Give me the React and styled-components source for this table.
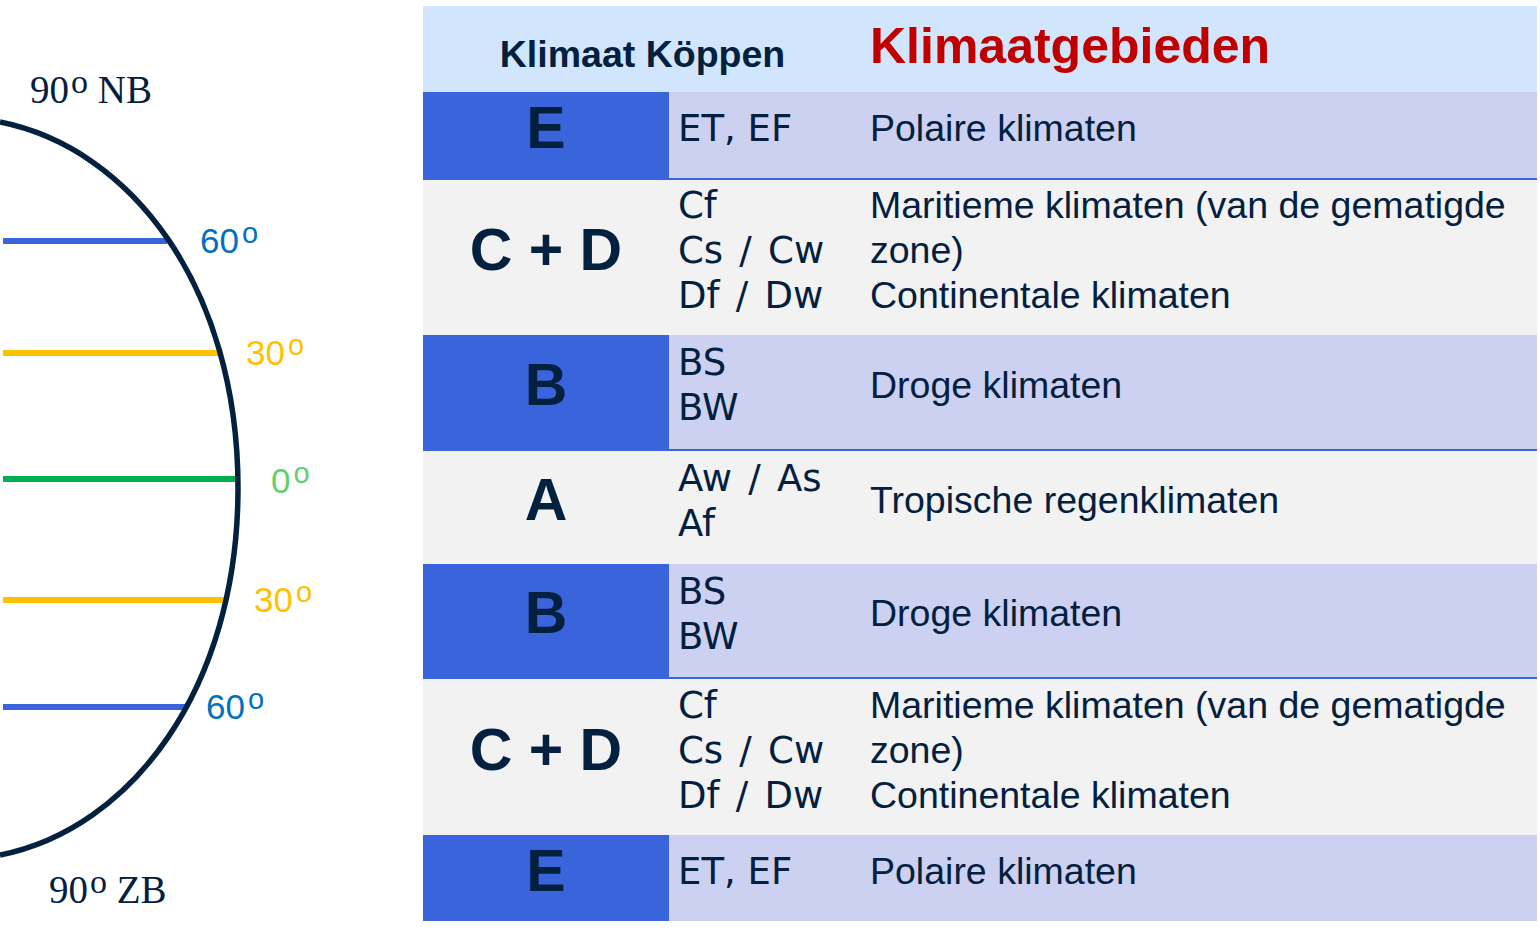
import React from 'react';
import styled, { createGlobalStyle } from 'styled-components';

const GlobalStyle = createGlobalStyle`
  html, body {
    margin:0;
    padding:0;
    background:#ffffff;
  }
  body {
    width:1540px;
    height:940px;
    overflow:hidden;
  }
`;

const NAVY = '#03203f';

const Page = styled.div`
  display:flex;
  align-items:flex-start;
  width:1540px;
  height:940px;
`;

const Globe = styled.svg`
  flex:0 0 423px;
  width:423px;
  height:940px;
  display:block;
`;

const Pole = styled.text`
  font-family:"Liberation Serif", "Times New Roman", serif;
  font-size:39px;
  fill:${NAVY};
`;

const Degree = styled.text`
  font-family:"Liberation Sans", Arial, sans-serif;
  font-size:35px;
  fill:${p => p.$c};
`;

const Table = styled.div`
  width:1114px;
  margin-top:6px;
  display:flex;
  flex-direction:column;
`;

const Header = styled.div`
  display:grid;
  grid-template-columns:435px 1fr;
  height:86px;
  background:#d1e6fd;
`;

const HeadLeft = styled.div`
  padding:30px 0 0 4px;
  text-align:center;
  font:bold 37.5px/37px "Liberation Sans", Arial, sans-serif;
  color:${NAVY};
`;

const HeadRight = styled.div`
  padding:15px 0 0 12px;
  font:bold 50px/50px "Liberation Sans", Arial, sans-serif;
  color:#c00000;
`;

const Row = styled.div`
  display:grid;
  grid-template-columns:246px 189px 1fr;
  height:${p => p.$h}px;
  background:${p => (p.$blue ? '#ccd1f1' : '#f2f2f2')};
  border-bottom:${p => (p.$line ? '2px solid #3a64db' : 'none')};
`;

const Letter = styled.div`
  display:flex;
  align-items:center;
  justify-content:center;
  padding-bottom:14px;
  background:${p => (p.$blue ? '#3a64db' : 'transparent')};
  font:bold 59px/59px "Liberation Sans", Arial, sans-serif;
  color:${NAVY};
`;

const Codes = styled.div`
  display:flex;
  flex-direction:column;
  justify-content:center;
  padding:0 0 14px 9px;
  font:37px/45px "DejaVu Sans", Verdana, sans-serif;
  white-space:pre;
  color:${NAVY};
`;

const Code = styled.span`
  word-spacing:${p => (p.$wide ? '4.5px' : '0')};
`;

const Desc = styled.div`
  display:flex;
  flex-direction:column;
  justify-content:center;
  padding:0 0 14px 12px;
  font:37.5px/45px "Liberation Sans", Arial, sans-serif;
  white-space:nowrap;
  color:${NAVY};
`;

const rows = [
  { letter: 'E', codes: ['ET, EF'], desc: ['Polaire klimaten'], blue: true, h: 86, line: true },
  {
    letter: 'C + D',
    codes: ['Cf', 'Cs / Cw', 'Df / Dw'],
    desc: ['Maritieme klimaten (van de gematigde', 'zone)', 'Continentale klimaten'],
    h: 155,
  },
  { letter: 'B', codes: ['BS', 'BW'], desc: ['Droge klimaten'], blue: true, h: 114, line: true },
  { letter: 'A', codes: ['Aw / As', 'Af'], desc: ['Tropische regenklimaten'], h: 113 },
  { letter: 'B', codes: ['BS', 'BW'], desc: ['Droge klimaten'], blue: true, h: 113, line: true },
  {
    letter: 'C + D',
    codes: ['Cf', 'Cs / Cw', 'Df / Dw'],
    desc: ['Maritieme klimaten (van de gematigde', 'zone)', 'Continentale klimaten'],
    h: 156,
  },
  { letter: 'E', codes: ['ET, EF'], desc: ['Polaire klimaten'], blue: true, h: 86 },
];

const latitudes = [
  { y: 241, x2: 167, stroke: '#3a64db', label: '60', lx: 200, ly: 253, c: '#0070c0' },
  { y: 353, x2: 218, stroke: '#ffc000', label: '30', lx: 246, ly: 365, c: '#ffc000' },
  { y: 479, x2: 237, stroke: '#00b050', label: '0', lx: 271, ly: 493, c: '#62cf6c' },
  { y: 600, x2: 224, stroke: '#ffc000', label: '30', lx: 254, ly: 612, c: '#ffc000' },
  { y: 707, x2: 186, stroke: '#3a64db', label: '60', lx: 206, ly: 719, c: '#0070c0' },
];

function Earth() {
  return (
    <Globe viewBox="0 0 423 940">
      {latitudes.map((l, i) => (
        <line key={i} x1="3" x2={l.x2} y1={l.y} y2={l.y} stroke={l.stroke} strokeWidth="6" />
      ))}
      <path
        d="M0 122 C131 148 238 287 238 488 C238 689 131 829 0 855"
        fill="none"
        stroke={NAVY}
        strokeWidth="5.5"
      />
      {latitudes.map((l, i) => (
        <Degree key={i} x={l.lx} y={l.ly} $c={l.c}>
          {l.label}
          <tspan dx="3" dy="-10" fontSize="29">o</tspan>
        </Degree>
      ))}
      <Pole x="30" y="103">
        90<tspan dx="2" dy="-10" fontSize="34">o</tspan>
        <tspan dy="10"> NB</tspan>
      </Pole>
      <Pole x="49" y="903">
        90<tspan dx="2" dy="-10" fontSize="34">o</tspan>
        <tspan dy="10"> ZB</tspan>
      </Pole>
    </Globe>
  );
}

export default function App() {
  return (
    <>
      <GlobalStyle />
      <Page>
        <Earth />
        <Table>
          <Header>
            <HeadLeft>Klimaat Köppen</HeadLeft>
            <HeadRight>Klimaatgebieden</HeadRight>
          </Header>
          {rows.map((r, i) => (
            <Row key={i} $blue={r.blue} $h={r.h} $line={r.line}>
              <Letter $blue={r.blue}>{r.letter}</Letter>
              <Codes>
                {r.codes.map((c, j) => (
                  <Code key={j} $wide={c.includes('/')}>{c}</Code>
                ))}
              </Codes>
              <Desc>
                {r.desc.map((d, j) => (
                  <span key={j}>{d}</span>
                ))}
              </Desc>
            </Row>
          ))}
        </Table>
      </Page>
    </>
  );
}
